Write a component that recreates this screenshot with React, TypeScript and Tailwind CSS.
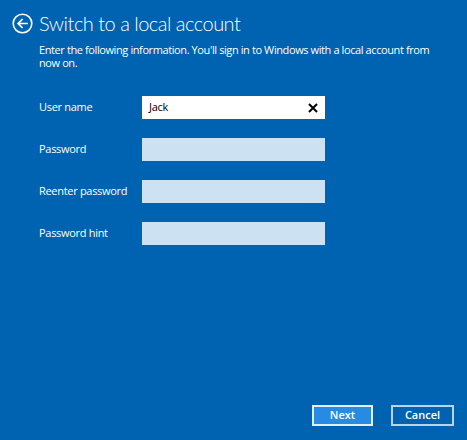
import React from "react";

const fields = [
  { label: "User name", value: "Jack", active: true },
  { label: "Password", value: "", active: false },
  { label: "Reenter password", value: "", active: false },
  { label: "Password hint", value: "", active: false },
];

function BackIcon() {
  return (
    <svg width="21" height="21" viewBox="0 0 21 21" fill="none">
      <circle cx="10.5" cy="10.5" r="9.3" stroke="white" strokeWidth="1.6" />
      <path
        d="M15 10.5H6.5M10 6.6L6.1 10.5L10 14.4"
        stroke="white"
        strokeWidth="1.7"
        strokeLinecap="square"
      />
    </svg>
  );
}

function ClearIcon() {
  return (
    <svg width="10" height="10" viewBox="0 0 10 10">
      <path d="M1 1L9 9M9 1L1 9" stroke="black" strokeWidth="2" />
    </svg>
  );
}

export default function App() {
  return (
    <div
      className="flex h-[440px] w-[467px] flex-col bg-[#0063b1] text-white"
      style={{ fontFamily: '"Open Sans", "Noto Sans", sans-serif' }}
    >
      <div className="flex items-center gap-[6px] pl-[12px] pt-[11px]">
        <BackIcon />
        <h1
          className="text-[20px] font-light leading-[24px] tracking-[-0.5px]"
          style={{ fontFamily: "Lato, sans-serif" }}
        >
          Switch to a local account
        </h1>
      </div>
      <p className="mt-[8px] w-[430px] pl-[39px] text-[11px] leading-[13px] tracking-[-0.4px]">
        Enter the following information. You'll sign in to Windows with a local account from now on.
      </p>

      <div className="mt-[27px] flex flex-col gap-[19px] pl-[39px]">
        {fields.map((f) => (
          <div key={f.label} className="flex items-center">
            <span className="w-[103px] text-[11px] tracking-[-0.3px]">
              {f.label}
            </span>
            <div
              className={
                f.active
                  ? "flex h-[23px] w-[183px] items-center justify-between bg-white pl-[7px] pr-[7px] text-[11px] text-black"
                  : "h-[23px] w-[183px] bg-[#cce1f1]"
              }
            >
              {f.active && (
                <>
                  <span className="tracking-[-0.3px]">{f.value}</span>
                  <ClearIcon />
                </>
              )}
            </div>
          </div>
        ))}
      </div>

      <div className="mt-auto flex justify-end gap-[18px] pb-[14px] pr-[13px]">
        <button className="h-[21px] w-[61px] border-2 border-[#e3eef8] bg-[#268be1] text-[11px] font-semibold text-white">
          Next
        </button>
        <button className="h-[21px] w-[63px] border-2 border-[#b9d3ea] bg-[#0063b1] text-[11px] font-semibold text-white">
          Cancel
        </button>
      </div>
    </div>
  );
}
